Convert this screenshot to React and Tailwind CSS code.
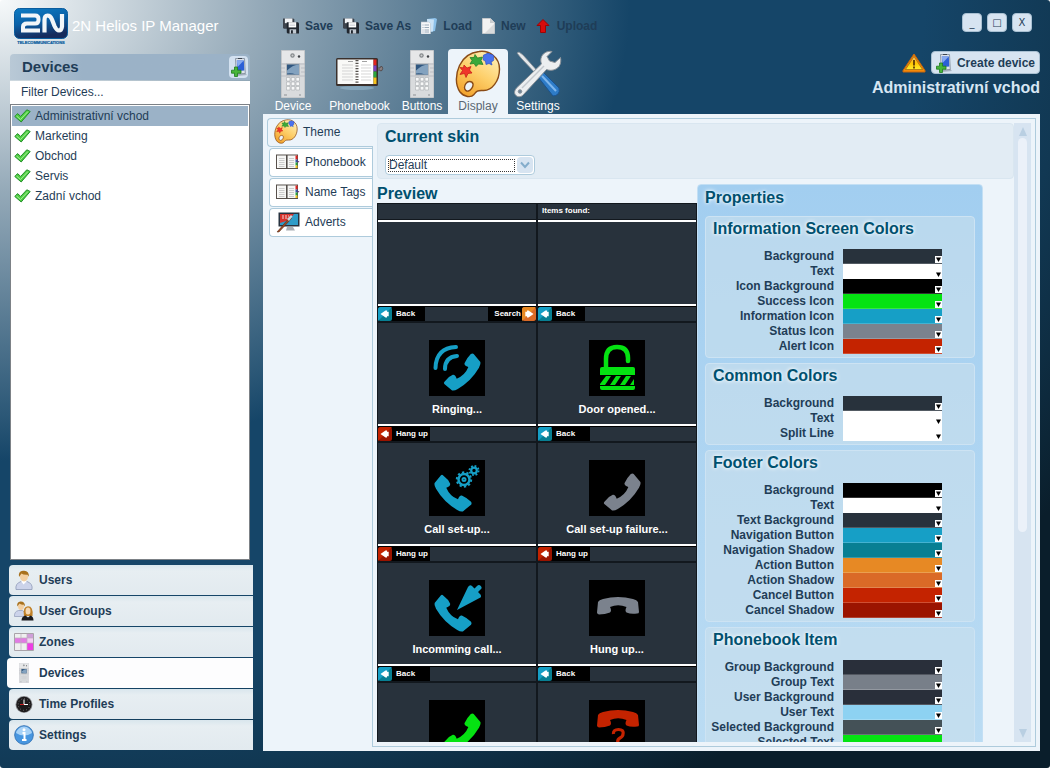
import { useId, useState } from 'react';

const devices = ['Administrativní vchod', 'Marketing', 'Obchod', 'Servis', 'Zadní vchod'];

const colorGroups = [
  {
    title: 'Information Screen Colors',
    rows: [
      ['Background', '#28323c'],
      ['Text', '#ffffff'],
      ['Icon Background', '#000000'],
      ['Success Icon', '#05e312'],
      ['Information Icon', '#169fc6'],
      ['Status Icon', '#7b828d'],
      ['Alert Icon', '#c42300'],
    ],
  },
  {
    title: 'Common Colors',
    rows: [
      ['Background', '#28323c'],
      ['Text', '#ffffff'],
      ['Split Line', '#ffffff'],
    ],
  },
  {
    title: 'Footer Colors',
    rows: [
      ['Background', '#000000'],
      ['Text', '#ffffff'],
      ['Text Background', '#28323c'],
      ['Navigation Button', '#169fc6'],
      ['Navigation Shadow', '#087f93'],
      ['Action Button', '#e78924'],
      ['Action Shadow', '#da6a27'],
      ['Cancel Button', '#c42300'],
      ['Cancel Shadow', '#9b1400'],
    ],
  },
  {
    title: 'Phonebook Item',
    rows: [
      ['Group Background', '#292f3a'],
      ['Group Text', '#787f89'],
      ['User Background', '#292f3a'],
      ['User Text', '#8dd2f2'],
      ['Selected Background', '#445157'],
      ['Selected Text', '#05e312'],
    ],
  },
];

/* ---------- icons ---------- */

function Logo() {
  return (
    <svg width="54" height="38" viewBox="0 0 54 38" aria-label="2N Telecommunications" role="img">
      <defs>
        <linearGradient id="logo" x1="0" y1="0" x2="0.3" y2="1">
          <stop offset="0" stopColor="#0d7cc4" />
          <stop offset="0.5" stopColor="#0a61a8" />
          <stop offset="1" stopColor="#152a5c" />
        </linearGradient>
      </defs>
      <rect x="0.5" y="0.5" width="53" height="30" rx="5" fill="url(#logo)" stroke="#0a5d9e" />
      <path d="M7 7.500h14q3.500 0 3.500 3.500v1q0 3.500-3.500 3.500h-8q-4 0-4 3.500v3.500h17" fill="none" stroke="#f2f6f9" strokeWidth="4" />
      <path d="M30.500 24.500V12q0-4.500 3-4.500t4.500 4l2.500 6.500q2 4.500 4.500 4.500t3-4V6" fill="none" stroke="#f2f6f9" strokeWidth="4.200" />
      <text x="27" y="36" textAnchor="middle" fontSize="4" fontWeight="bold" fill="#0a5d9e" stroke="#0a5d9e" strokeWidth=".2" fontFamily="Liberation Sans, sans-serif">TELECOMMUNICATIONS</text>
    </svg>
  );
}

function AddDeviceIcon() {
  return (
    <svg width="16" height="20" viewBox="0 0 16 20" aria-hidden="true">
      <path d="M5 17l9-1 2 2-9 1z" fill="#8b95a3" opacity=".6" />
      <path d="M4.500 1.500h9l.8 15-9 .5z" fill="#dfe4ea" stroke="#7a8796" strokeWidth=".8" />
      <path d="M7 1.500h4" stroke="#3c444e" />
      <path d="M5.800 3.500h7l.5 10-7 .5z" fill="#2c5fd6" />
      <path d="M5.800 3.500h7L6.500 10z" fill="#87aaf0" />
      <path d="M3.500 10h3v3.200H10v3H6.500v3.300h-3v-3.300H.5v-3h3z" fill="#48b53a" stroke="#1c7a1c" strokeWidth=".8" />
    </svg>
  );
}

function CheckIcon() {
  return (
    <svg width="17" height="14" viewBox="0 0 17 14" aria-hidden="true">
      <path d="M.8 7.500L3.500 4.600l3.200 2.800L12.800.8l3.400 1.700L7.200 13z" fill="#4fce42" stroke="#248f2b" strokeLinejoin="round" />
      <path d="M2.500 7l4 3.500L14 2.500" fill="none" stroke="#a4f096" />
    </svg>
  );
}

function SaveIcon() {
  return (
    <svg width="16" height="16" viewBox="0 0 17 16" aria-hidden="true">
      <path d="M0 0h11l1 1v10H1l-1-1z" fill="#3c434c" />
      <path d="M2 0h8v5H2z" fill="#f3f5f7" />
      <path d="M4 4h12l1 1v11H5l-1-1z" fill="#20262e" />
      <path d="M6 4h8v5.500H6z" fill="#fff" />
      <path d="M7 6h6M7 7.500h6" stroke="#b5bcc4" strokeWidth=".6" />
      <path d="M7 11.500h7V16H7z" fill="#c2cad2" />
      <path d="M8.500 12.500h2V16h-2z" fill="#20262e" />
    </svg>
  );
}

function LoadIcon() {
  return (
    <svg width="16" height="16" viewBox="0 0 16 16" aria-hidden="true">
      <path d="M6 1l8-1 2 1-2 12-7 1z" fill="#8cc1ea" />
      <path d="M6 1l7 .5-1 12-5 .5z" fill="#c9e2f6" />
      <path d="M0 4h8l1.500 1.500V16H0z" fill="#f5f7f9" stroke="#bcc5cd" strokeWidth=".6" />
      <path d="M1.500 7h1M3.500 7h4.500M1.500 9.500h1M3.500 9.500h4.500M1.500 12h1M3.500 12h4.500M1.500 14h1M3.500 14h4.500" stroke="#8396a8" strokeWidth=".8" />
    </svg>
  );
}

function NewIcon() {
  return (
    <svg width="13" height="16" viewBox="0 0 13 16" aria-hidden="true">
      <path d="M.5.5h8l4 4v11H.5z" fill="#f2f2f2" stroke="#c3c7ca" />
      <path d="M8 .5v4.500h4.500z" fill="#c9ccce" />
      <path d="M3 15L12 6v9z" fill="#d9dbdc" />
    </svg>
  );
}

function UploadIcon() {
  return (
    <svg width="15" height="14" viewBox="0 0 15 14" aria-hidden="true">
      <path d="M7 .5l6 6H9.500v7h-5v-7H1z" fill="#d90b0b" stroke="#9c0404" strokeLinejoin="round" />
    </svg>
  );
}

function IntercomIcon({ className }) {
  return (
    <svg className={className} viewBox="0 0 24 48" aria-hidden="true">
      <path d="M.5.5h23v47H.5z" fill="#d9dbdd" stroke="#c5c8cb" />
      <path d="M1 1h22v12H1z" fill="#e6e7e8" />
      <circle cx="11.500" cy="5.500" r="2.200" fill="#85898d" />
      <circle cx="11.500" cy="5.500" r="1" fill="#d0d0d0" />
      <circle cx="18" cy="6.500" r="1.200" fill="#3f4347" />
      <path d="M0 14h24M0 18h4M0 22h4M20 18h4M20 22h4M0 26h24" stroke="#a9adb1" strokeWidth=".6" />
      <path d="M5 13.500h14v12H5z" fill="#b4b8bc" />
      <path d="M6 14.500h12v10H6z" fill="#2f567f" />
      <path d="M18 14.500v10h-3q-5-2-9-1v-3q6-6 12-6z" fill="#83a2bf" />
      <path d="M5.500 27.500h3.500V31H5.500zM10.300 27.500h3.500V31h-3.500zM15 27.500h3.500V31H15zM5.500 32h3.500v3.500H5.500zM10.300 32h3.500v3.500h-3.500zM15 32h3.500v3.500H15zM5.500 36.500h3.500V40H5.500zM10.300 36.500h3.500V40h-3.500zM15 36.500h3.500V40H15z" fill="#f7f8f8" stroke="#9fa3a7" strokeWidth=".5" />
      <path d="M3 45h3M18 45h2" stroke="#8d9195" />
    </svg>
  );
}

function OrganizerIcon() {
  return (
    <svg width="48" height="34" viewBox="0 0 48 34" aria-hidden="true">
      <ellipse cx="21" cy="31" rx="17" ry="2" fill="#9ec2d8" opacity=".5" />
      <path d="M41 11h3q0-2 2-1.500 1.500 1.500 0 4-2 1-2-.5h-3z" fill="#8a7f80" stroke="#4e4444" strokeWidth=".8" />
      <rect x="0" y="1" width="42" height="28" rx="1.500" fill="#3a302c" />
      <path d="M1.500 2.500H21v24.500H1.500z" fill="#f9f9f7" />
      <path d="M21 2.500h16.500v24.500H21z" fill="#fff" />
      <path d="M37.500 2.500h3v6h-3z" fill="#e3231f" />
      <path d="M37.500 8.500h3v6h-3z" fill="#7d3fbe" />
      <path d="M37.500 14.500h3v6h-3z" fill="#2ba63d" />
      <path d="M37.500 20.500h3V27h-3z" fill="#f5c21b" />
      <path d="M6 8h11M6 11h11M6 14h11M6 17h11M6 20h11M6 23h11M25 8h10M25 11h10M25 14h10M25 17h10M25 20h10M25 23h10" stroke="#c4c4c4" strokeWidth=".7" />
      <path d="M21 3v24" stroke="#55504c" strokeWidth="3" strokeDasharray="1.200 1.500" />
      <path d="M12 4.500h5M26 4.500h5" stroke="#8a8a8a" strokeWidth=".8" />
    </svg>
  );
}

function BookIcon() {
  return (
    <svg width="24" height="16" viewBox="0 0 24 16" aria-hidden="true">
      <path d="M20 6l3.500 1.500L20 10z" fill="#7a2d8c" />
      <rect x=".5" y="1" width="21" height="13.500" fill="#fff" stroke="#57504b" />
      <path d="M1.500 2H10q1 0 1 1v11H1.500zM11 3q0-1 1-1h7.500v12H11z" fill="#f6f6f4" />
      <path d="M3 4.500h5.500M3 6.500h5.500M3 8.500h5.500M3 10.500h5.500M3 12.500h5.500M13 4.500h5M13 6.500h5M13 8.500h5M13 10.500h5M13 12.500h5" stroke="#b9b9b9" strokeWidth=".7" />
      <path d="M10.800 1v13.500" stroke="#4a4541" strokeWidth="1.500" />
      <path d="M20.500 1.500v4" stroke="#e3231f" strokeWidth="2" />
      <path d="M20.500 5.500v3" stroke="#3453a8" strokeWidth="2" />
      <path d="M20.500 8.500v3" stroke="#2ba63d" strokeWidth="2" />
      <path d="M20.500 11.500V14" stroke="#f5c21b" strokeWidth="2" />
    </svg>
  );
}

function PaletteIcon({ className }) {
  return (
    <svg className={className} viewBox="0 0 46 48" aria-hidden="true">
      <defs>
        <linearGradient id="wood" x1="0.8" y1="0" x2="0.2" y2="1">
          <stop offset="0" stopColor="#fff0b8" />
          <stop offset="0.5" stopColor="#fdcf6a" />
          <stop offset="1" stopColor="#f2a12a" />
        </linearGradient>
      </defs>
      <path
        d="M24 1.500C34 0 44.500 7 44.500 19S37 41 28 40.500C22 40 21 42 19 44.500C16 48 9 47 5 42C0 35 .5 24 4.500 15.500C8 8 15 2.500 24 1.500zM14.500 31.500c-3 0-5 3.500-5 6s2 4 4 3.500s5-4 4.500-7c-.3-1.500-1.500-2.500-3.500-2.500z"
        fill="url(#wood)"
        fillRule="evenodd"
        stroke="#8a4b16"
        strokeWidth="1.400"
      />
      <path d="M9 15l3 3 4-1.500-1.500 3.500 2.500 3-4 .5-2 4-1.500-4-4.500 1 2.500-4-2.500-3 3.500.3z" fill="#f0352b" stroke="#c41812" strokeWidth=".7" />
      <path d="M20 4.500l2.500 3.500 5-1-1.500 3.500 2 4-4.500-.5-2.500 2.500-2-3-4 .5 2-3.500-2-3 4 0z" fill="#3aa83a" stroke="#1c7a22" strokeWidth=".7" />
      <path d="M30 4.500q3-2.500 6 0 3.500 0 2.500 3.500 1 3.500-2.500 3.500l1 3.500-3-1.500-3 1-.5-3.500q-3.500-.5-2-3.500-1-3 1.500-3z" fill="#4a72ee" stroke="#2c4fc4" strokeWidth=".7" />
    </svg>
  );
}

function ToolsIcon() {
  return (
    <svg width="48" height="48" viewBox="0 0 48 48" aria-hidden="true">
      <path d="M3 3l2-1 4 3 17 19-2 2L7 8z" fill="#e4e7ea" stroke="#878e96" strokeWidth=".8" />
      <path d="M24 27l5-5 16 16q1 4-1 6t-5 2z" fill="#2e7cc8" stroke="#1a5390" />
      <path d="M28 26l14 15" stroke="#7fb6ec" strokeWidth="2" />
      <path d="M38 1.500c-5-1-10 2-11 7-.5 2 0 4 .5 5.500L2.500 38c-2.500 3-2.500 5.500-.5 7.500s5.500 1.500 7.500-1L32.500 19.500c5 2 10 0 12.500-3 2-3 2-6 1.500-9l-5.500 5-5.500-1.500L33 6.500z" fill="#eceef0" stroke="#8d949b" />
      <path d="M30 16L8 38" stroke="#c3c8cd" strokeWidth="1.500" />
      <circle cx="6" cy="41.500" r="1.800" fill="#6a8298" stroke="#8d949b" />
    </svg>
  );
}

function AdvertIcon() {
  return (
    <svg width="24" height="22" viewBox="0 0 24 22" aria-hidden="true">
      <path d="M11 16h6l2 3.500h-9z" fill="#a9aeb4" />
      <path d="M2.500 1.500h21v14h-21z" fill="#27323f" />
      <path d="M4 3h18v11H4z" fill="#2e9cc8" />
      <path d="M4 3h14l-5 6-9 3z" fill="#d6322c" />
      <path d="M6 5h7M6 7h5" stroke="#fff" strokeWidth=".8" strokeDasharray="2 1" />
      <path d="M1 21L14 6l1.500 1.500L3 21z" fill="#9c4a24" stroke="#4d2411" strokeWidth=".5" />
      <path d="M11 8l4-4 1.500 1.500L13 10z" fill="#cfd4d9" />
    </svg>
  );
}

function WarningIcon() {
  return (
    <svg width="24" height="20" viewBox="0 0 24 20" role="img" aria-label="Warning">
      <defs>
        <linearGradient id="warn" x1="0" y1="0" x2="0" y2="1">
          <stop offset="0" stopColor="#f7c27a" />
          <stop offset="0.5" stopColor="#ffc400" />
          <stop offset="1" stopColor="#ffee2e" />
        </linearGradient>
      </defs>
      <path d="M12 1L23 17.500V19H1v-1.500z" fill="#f58a0a" stroke="#c8660a" strokeLinejoin="round" />
      <path d="M12 3.500l8.500 13H3.500z" fill="url(#warn)" stroke="#8a5a10" strokeWidth=".6" />
      <path d="M12 7v5.500M12 13.500v2" stroke="#5c3a06" strokeWidth="1.800" />
    </svg>
  );
}

function UserIcon() {
  return (
    <svg width="20" height="20" viewBox="0 0 20 20" aria-hidden="true">
      <path d="M2 19.500q-1-6 5-8h6q6 2 5 8z" fill="#ccd3ea" stroke="#8f9bb8" strokeWidth=".8" />
      <path d="M7 11l2.500 3.500L13 11z" fill="#fff" />
      <ellipse cx="10" cy="6.500" rx="4" ry="5" fill="#f3cfa0" />
      <path d="M5 7Q4 1 9 .8q6-.8 6 6l-1.500-2Q9 5 7.500 3.500z" fill="#a8711d" />
    </svg>
  );
}

function UsersIcon() {
  return (
    <svg width="20" height="20" viewBox="0 0 20 20" aria-hidden="true">
      <path d="M.5 15.500q-.5-5 4-6h4q3 1 3 6z" fill="#ccd3ea" stroke="#8f9bb8" strokeWidth=".7" />
      <ellipse cx="7" cy="5" rx="3" ry="4" fill="#f3cfa0" />
      <path d="M3.300 5.500Q2.500.8 6.500.5 11 .3 11 5.500l-1.500-2Q7 4 5.500 2.500z" fill="#a8711d" />
      <path d="M10 15Q8.500 5.500 14 5.300q5.500 0 4.500 9.700z" fill="#c08128" />
      <ellipse cx="14" cy="10" rx="2.500" ry="3.500" fill="#f6d9b4" />
      <path d="M7.500 19.500q0-4 4-5l2.500 2 2.500-2q3 1 3 5z" fill="#1b1b1f" />
    </svg>
  );
}

function ZonesIcon() {
  return (
    <svg width="20" height="18" viewBox="0 0 20 18" aria-hidden="true">
      <path d="M.5.5h19v17H.5z" fill="#efefef" stroke="#a9a3a9" />
      <path d="M1 5h12v5H1z" fill="#e27ae4" />
      <path d="M13 1h6v4h-6z" fill="#cf9fd9" />
      <path d="M13 5h6v5h-6z" fill="#f3d0f3" />
      <path d="M13 10h6v7h-6z" fill="#ee3de4" />
      <path d="M7 1v16M13 1v16M1 5h18M1 10h18" stroke="#bbaebd" strokeWidth=".7" />
    </svg>
  );
}

function ClockIcon() {
  return (
    <svg width="18" height="19" viewBox="0 0 18 19" aria-hidden="true">
      <circle cx="9" cy="9.500" r="8.500" fill="#8d9094" />
      <circle cx="9" cy="9.500" r="7.700" fill="#1c1a1c" />
      <circle cx="9" cy="9.500" r="5.800" fill="none" stroke="#a8a8a8" strokeWidth=".8" strokeDasharray=".7 2.300" />
      <path d="M9 4.500v5h4" fill="none" stroke="#fff" />
      <path d="M9 9.500H5" stroke="#d22" strokeWidth=".9" />
    </svg>
  );
}

function InfoIcon() {
  return (
    <svg width="20" height="20" viewBox="0 0 20 20" aria-hidden="true">
      <circle cx="10" cy="10" r="9.300" fill="#4796e0" stroke="#3a78b8" />
      <path d="M2 8a8.200 8.200 0 0 1 16 0q-8 5-16 0z" fill="#a7d2f7" />
      <path d="M8.500 8H10.500v7M8 15h4.500" fill="none" stroke="#fff" strokeWidth="2" />
      <circle cx="10" cy="4.800" r="1.500" fill="#fff" />
    </svg>
  );
}

/* ---------- call state pictures shown on the intercom screens ---------- */

const HANDSET =
  'M9 22Q10 20 14 19Q29 15 44 19Q48 20 49 22L50 32Q50 33.500 48 33.500Q42 34.500 37.500 32.500Q35.500 31 37.500 27Q29 23.500 21 27Q23 31 21 32.500Q16 34.500 10 34.500Q8 34 8 32.500Z';
const LIFTED = 'translate(4 4) rotate(135 29 28)';
const RECEIVER = 'translate(-5 5) rotate(-135 29 28)';

function StatePicture({ kind }) {
  return (
    <svg width="56" height="56" viewBox="0 0 56 56" className="bg-black" aria-hidden="true">
      {kind === 'ringing' && (
        <g fill="#169fc6" stroke="#169fc6">
          <path d={HANDSET} transform={LIFTED} stroke="none" />
          <path d="M6.500 28Q7 8 27 7M16 29Q16 17 28 16" fill="none" strokeWidth="4" strokeLinecap="round" />
        </g>
      )}
      {kind === 'opened' && (
        <g fill="#05e312">
          <path d="M17 28V19Q17 7 28 7T39 18v3" fill="none" stroke="#05e312" strokeWidth="4.500" strokeLinecap="round" />
          <path d="M13 27h31q2 0 2 2v6H11v-6q0-2 2-2zM11 46h35v2q0 2-2 2H13q-2 0-2-2z" />
          <path d="M17 36h5l-6 9h-5v-1zM27 36h5l-6 9h-5zM37 36h5l-6 9h-5zM45 39v6h-4z" />
        </g>
      )}
      {kind === 'setup' && (
        <g fill="#169fc6">
          <path d={HANDSET} transform={RECEIVER} />
          <g fill="none" stroke="#169fc6">
            <circle cx="35" cy="19.500" r="5.500" strokeWidth="2.500" />
            <circle cx="35" cy="19.500" r="7.200" strokeWidth="2" strokeDasharray="2.260 2.260" />
            <circle cx="35" cy="19.500" r="1.500" strokeWidth="2" />
            <circle cx="45" cy="10.500" r="2.800" strokeWidth="2.200" />
            <circle cx="45" cy="10.500" r="4.600" strokeWidth="1.800" strokeDasharray="1.810 1.810" />
          </g>
        </g>
      )}
      {kind === 'failure' && <path d={HANDSET} transform={LIFTED} fill="#7b828d" />}
      {kind === 'incoming' && (
        <g fill="#169fc6">
          <path d={HANDSET} transform={RECEIVER} />
          <path d="M28 30L39 7Q41 4 43 6L45.500 8.500L48 6Q50 4 51.800 6T51.500 9.500L49 12L51.500 14.500Q53 17 50.500 18Z" />
        </g>
      )}
      {kind === 'hungup' && <path d={HANDSET} fill="#7b828d" />}
      {kind === 'answer' && <path d={HANDSET} transform={LIFTED} fill="#05e312" />}
      {kind === 'unknown' && (
        <g>
          <path d={HANDSET} transform="translate(0 -7)" fill="#c42300" />
          <path d="M24.500 34Q24 29.500 29.500 29.500T34 34Q34 36.500 31 38T29 43" fill="none" stroke="#c42300" strokeWidth="3.200" />
          <circle cx="29" cy="48" r="2" fill="#c42300" />
        </g>
      )}
    </svg>
  );
}

function KeyIcon({ tone, flip }) {
  const fills = { nav: ['#169fc6', '#087f93'], action: ['#e78924', '#da6a27'], cancel: ['#c42300', '#9b1400'] }[tone];
  return (
    <svg width="14" height="14" viewBox="0 0 14 14" className="shrink-0" aria-hidden="true">
      <rect width="14" height="14" rx="2.500" fill={fills[1]} />
      <path d="M0 14V2.500Q0 0 2.500 0H14z" fill={fills[0]} />
      <path d={flip ? 'M11.500 7L6.500 3.500H5v1.200H3.300v4.600H5v1.200h1.500z' : 'M2.500 7l5-3.500H9v1.200h1.700v4.600H9v1.200H7.500z'} fill="#fff" />
    </svg>
  );
}

function Screen({ header, state, label, back, search, wide }) {
  return (
    <div className="flex h-[120px] flex-col border-x border-[#12181e] bg-[#28323c] text-white">
      {header !== undefined && (
        <>
          <div className="h-[17px] border-y border-[#12181e] pl-1 text-[8px] leading-[14px] font-bold">{header}</div>
          <div className="h-[2px] bg-white" />
        </>
      )}
      <div className="flex flex-1 flex-col items-center">
        {state && (
          <div className="mt-[17px] h-[57px]">
            <StatePicture kind={state} />
          </div>
        )}
        {label && <p className="mt-1 text-[11px] leading-4 font-bold">{label}</p>}
      </div>
      {back && (
        <>
          <div className="h-[2px] bg-white" />
          <div className="flex h-[17px] justify-between border-t border-b-2 border-t-black border-b-[#12181e] text-[8px] leading-[14px] font-bold">
            <span className={`flex gap-1 bg-black ${wide ? 'w-[52px]' : 'w-[47px]'}`}>
              <KeyIcon tone={back === 'Back' ? 'nav' : 'cancel'} />
              <span className="whitespace-nowrap">{back}</span>
            </span>
            {search && (
              <span className="flex w-[48px] justify-end gap-px bg-black">
                {search}
                <KeyIcon tone="action" flip />
              </span>
            )}
          </div>
        </>
      )}
    </div>
  );
}

/* ---------- page parts ---------- */

function SideNav() {
  const [active, setActive] = useState('Devices');
  const items = [
    ['Users', <UserIcon />],
    ['User Groups', <UsersIcon />],
    ['Zones', <ZonesIcon />],
    ['Devices', <IntercomIcon className="h-5 w-[10px]" />],
    ['Time Profiles', <ClockIcon />],
    ['Settings', <InfoIcon />],
  ];
  return (
    <nav className="mt-[5px] flex flex-col gap-px">
      {items.map(([name, icon]) => (
        <button
          key={name}
          type="button"
          onClick={() => setActive(name)}
          className={`flex h-[30px] items-center rounded-l text-left text-xs font-bold ${
            active === name
              ? 'ml-[7px] bg-[#fdfdfe] pl-[7px]'
              : 'ml-[9px] bg-linear-to-b from-[#d9e6ed] via-[#e7eef2] via-20% to-[#e2eaef] pl-[5px]'
          }`}
        >
          <span className="flex w-5 justify-center">{icon}</span>
          <span className="ml-[5px]">{name}</span>
        </button>
      ))}
    </nav>
  );
}

function Sidebar() {
  const [selected, setSelected] = useState(devices[0]);
  return (
    <aside className="flex w-[253px] shrink-0 flex-col pb-[18px]">
      <div className="flex h-[54px] items-start gap-1 pt-2 pl-[14px]">
        <Logo />
        <h1 className="pt-[9px] text-[15px] leading-[18px] whitespace-nowrap text-white">2N Helios IP Manager</h1>
      </div>
      <div className="mr-[3px] ml-[10px] flex min-h-0 flex-1 flex-col">
        <div className="flex h-[26px] shrink-0 items-center justify-between rounded-t bg-linear-to-r from-[#b9c9d6] to-[#9bb2c7] to-30% pr-[2px] pl-3">
          <h2 className="text-[15px] font-bold">Devices</h2>
          <button type="button" aria-label="Add device" className="flex h-[22px] w-[19px] items-center justify-center rounded bg-[#d3e1f0]">
            <AddDeviceIcon />
          </button>
        </div>
        <input
          type="text"
          aria-label="Filter devices"
          placeholder="Filter Devices..."
          className="mt-px h-[23px] w-full shrink-0 bg-white px-[11px] pb-[2px] text-xs placeholder:text-[#1f3d57] placeholder:opacity-100"
        />
        <ul className="min-h-0 flex-1 border border-[#7c8186] bg-white p-px">
          {devices.map((name) => (
            <li key={name}>
              <button
                type="button"
                onClick={() => setSelected(name)}
                className={`flex h-5 w-full items-center gap-1 pl-[2px] text-left text-xs ${selected === name ? 'bg-[#9bb2c7]' : ''}`}
              >
                <CheckIcon />
                {name}
              </button>
            </li>
          ))}
        </ul>
      </div>
      <SideNav />
    </aside>
  );
}

function Header() {
  const actions = [
    ['Save', <SaveIcon />],
    ['Save As', <SaveIcon />],
    ['Load', <LoadIcon />],
    ['New', <NewIcon />],
    ['Upload', <UploadIcon />],
  ];
  const tabs = [
    ['Device', 'w-[60px]', <IntercomIcon className="h-12 w-6" />],
    ['Phonebook', 'w-[73px]', <OrganizerIcon />],
    ['Buttons', 'w-[52px]', <IntercomIcon className="h-12 w-6" />],
    ['Display', 'w-[60px]', <PaletteIcon className="h-12 w-[46px]" />],
    ['Settings', 'w-[60px]', <ToolsIcon />],
  ];
  return (
    <header className="flex h-[114px] shrink-0 justify-between">
      <div className="flex flex-col justify-between">
        <div className="flex gap-[10px] pt-4 pl-5">
          {actions.map(([name, icon]) => (
            <button key={name} type="button" className="flex h-5 items-center gap-[6px] text-xs font-bold whitespace-nowrap">
              {icon}
              {name}
            </button>
          ))}
        </div>
        <nav className="flex">
          {tabs.map(([name, width, icon]) => (
            <button
              key={name}
              type="button"
              className={`flex h-[65px] flex-col items-center rounded-t pt-px text-xs ${width} ${
                name === 'Display' ? 'bg-[#edf4fa] text-[#5a6773]' : 'text-white'
              }`}
            >
              <span className="flex h-12 shrink-0 items-center">{icon}</span>
              <span className="leading-4">{name}</span>
            </button>
          ))}
        </nav>
      </div>
      <div className="flex flex-col items-end">
        <div className="flex gap-[5px] pt-[13px] pr-2">
          {[
            ['_', 'Minimize'],
            ['□', 'Maximize'],
            ['X', 'Close'],
          ].map(([sign, label]) => (
            <button
              key={label}
              type="button"
              aria-label={label}
              className="h-[19px] w-5 rounded border border-[#a9c0d2] bg-[#d7e4f1] font-['DejaVu_Sans',sans-serif] text-[10px] leading-[17px]"
            >
              {sign}
            </button>
          ))}
        </div>
        <div className="mt-[19px] flex items-center gap-[5px]">
          <WarningIcon />
          <button type="button" className="flex h-[23px] items-center gap-[5px] rounded border border-[#a9c0d2] bg-[#d7e4f1] px-1 text-xs font-bold whitespace-nowrap">
            <AddDeviceIcon />
            Create device
          </button>
        </div>
        <p className="mt-1 text-base leading-5 font-bold text-[#d7e6f3]">Administrativní vchod</p>
      </div>
    </header>
  );
}

function SectionTabs() {
  const tabs = [
    ['Phonebook', <BookIcon />],
    ['Name Tags', <BookIcon />],
    ['Adverts', <AdvertIcon />],
  ];
  return (
    <nav className="flex w-[105px] shrink-0 flex-col gap-px text-xs">
      <button
        type="button"
        className="relative z-10 -mr-px flex h-[29px] items-center gap-[5px] rounded-l border border-r-0 border-[#aecbdc] bg-[#edf4fa] pb-[2px] pl-[6px]"
      >
        <PaletteIcon className="h-[25px] w-6" />
        Theme
      </button>
      {tabs.map(([name, icon]) => (
        <button
          key={name}
          type="button"
          className="ml-[2px] flex h-[29px] items-center gap-[5px] rounded-l border border-r-0 border-[#aecbdc] bg-white pb-[2px] pl-[6px] whitespace-nowrap"
        >
          {icon}
          {name}
        </button>
      ))}
    </nav>
  );
}

function ColorRow({ name, color }) {
  const id = useId();
  return (
    <div className="flex h-[15px] items-center">
      <label htmlFor={id} className="w-[128px] text-right text-xs leading-[15px] font-bold whitespace-nowrap">
        {name}
      </label>
      <button
        id={id}
        type="button"
        className="ml-[9px] flex h-[15px] w-[99px] items-end justify-end border-b border-white/20"
        style={{ backgroundColor: color }}
      >
        <svg width="7" height="7" viewBox="0 0 7 7" className="bg-white" aria-hidden="true">
          <path d="M1 1.500h5L3.500 6z" fill="#000" />
        </svg>
      </button>
    </div>
  );
}

const glow = '[text-shadow:0_0_5px_#fff,0_0_3px_#e8f4fc]';

function Properties() {
  return (
    <section className="w-[286px] shrink-0 rounded border border-[#c3dff4] bg-linear-to-b from-[#a2cef0] to-[#bbdcf3] px-[7px] pt-[3px] text-[#1f3d57]">
      <h2 className={`h-[28px] text-base leading-5 font-bold text-[#00506f] ${glow}`}>Properties</h2>
      <div className="flex flex-col gap-[5px]">
        {colorGroups.map((group) => (
          <div key={group.title} className="rounded border border-[#cde3f3] bg-[#c9dfec]/60 pb-[3px]">
            <h3 className={`h-[32px] pt-[2px] pl-[7px] text-base leading-5 font-bold text-[#00506f] ${glow}`}>{group.title}</h3>
            {group.rows.map(([name, color]) => (
              <ColorRow key={name} name={name} color={color} />
            ))}
          </div>
        ))}
      </div>
    </section>
  );
}

function ScrollBar() {
  return (
    <div className="flex w-[17px] shrink-0 flex-col items-center bg-[#d7e4f1] py-1" aria-hidden="true">
      <svg width="8" height="9" viewBox="0 0 8 9">
        <path d="M4 0l4 9H0z" fill="#b9cfe2" />
      </svg>
      <div className="mt-[2px] flex w-[9px] flex-1 flex-col">
        <div className="h-2/3 rounded-full bg-[#ebf1f9]" />
      </div>
      <svg width="8" height="9" viewBox="0 0 8 9">
        <path d="M4 9L0 0h8z" fill="#b9cfe2" />
      </svg>
    </div>
  );
}

function ThemePanel() {
  return (
    <div className="flex min-w-0 flex-1 border border-[#aecbdc] p-1">
      <div className="min-w-0 flex-1 overflow-hidden">
        <section className="h-[56px] rounded border border-[#d9e6f0] bg-[#e2ecf4] px-[7px] pt-[3px]">
          <h2 className="text-base leading-5 font-bold text-[#00506f]">
            <label htmlFor="skin">Current skin</label>
          </h2>
          <div className="mt-2 flex h-5 w-[150px] items-center justify-between rounded border border-[#aecbdc] bg-white pr-px pl-[2px]">
            <select id="skin" className="h-[13px] w-[127px] appearance-none border border-dotted border-[#3a3a3a] bg-white text-xs leading-[11px]">
              <option>Default</option>
            </select>
            <span className="flex h-4 w-4 items-center justify-center rounded bg-[#d7e4f1]">
              <svg width="10" height="8" viewBox="0 0 10 8" aria-hidden="true">
                <path d="M1 1.500l4 4.500 4-4.500" fill="none" stroke="#84adcb" strokeWidth="2" />
              </svg>
            </span>
          </div>
        </section>
        <div className="mt-[5px] flex items-start">
          <section className="w-[320px] shrink-0">
            <h2 className="h-[19px] text-base leading-[19px] font-bold text-[#00506f]">Preview</h2>
            <div className="grid grid-cols-2">
              <Screen header="" back="Back" search="Search" />
              <Screen header="Items found:" back="Back" />
              <Screen state="ringing" label="Ringing..." back="Hang up" wide />
              <Screen state="opened" label="Door opened..." back="Back" wide />
              <Screen state="setup" label="Call set-up..." back="Hang up" wide />
              <Screen state="failure" label="Call set-up failure..." back="Hang up" wide />
              <Screen state="incoming" label="Incomming call..." back="Back" wide />
              <Screen state="hungup" label="Hung up..." back="Back" wide />
              <Screen state="answer" />
              <Screen state="unknown" />
            </div>
          </section>
          <Properties />
        </div>
      </div>
      <ScrollBar />
    </div>
  );
}

export default function App() {
  return (
    <div className="flex h-screen overflow-hidden rounded-[3px] bg-[radial-gradient(100%_100%_at_0_0,#f6f9fa_0%,#94a9b8_25%,#2c5877_54%,#154568_60%,#154568_88%,#113853_102%,#0a1e2b_120%)] font-['Liberation_Sans',Arial,sans-serif] text-[#1f3d57]">
      <Sidebar />
      <main className="ml-[10px] flex min-w-0 flex-1 flex-col pr-[10px] pb-[17px]">
        <Header />
        <div className="flex min-h-0 flex-1 bg-[#edf4fa] p-1">
          <SectionTabs />
          <ThemePanel />
        </div>
      </main>
    </div>
  );
}
